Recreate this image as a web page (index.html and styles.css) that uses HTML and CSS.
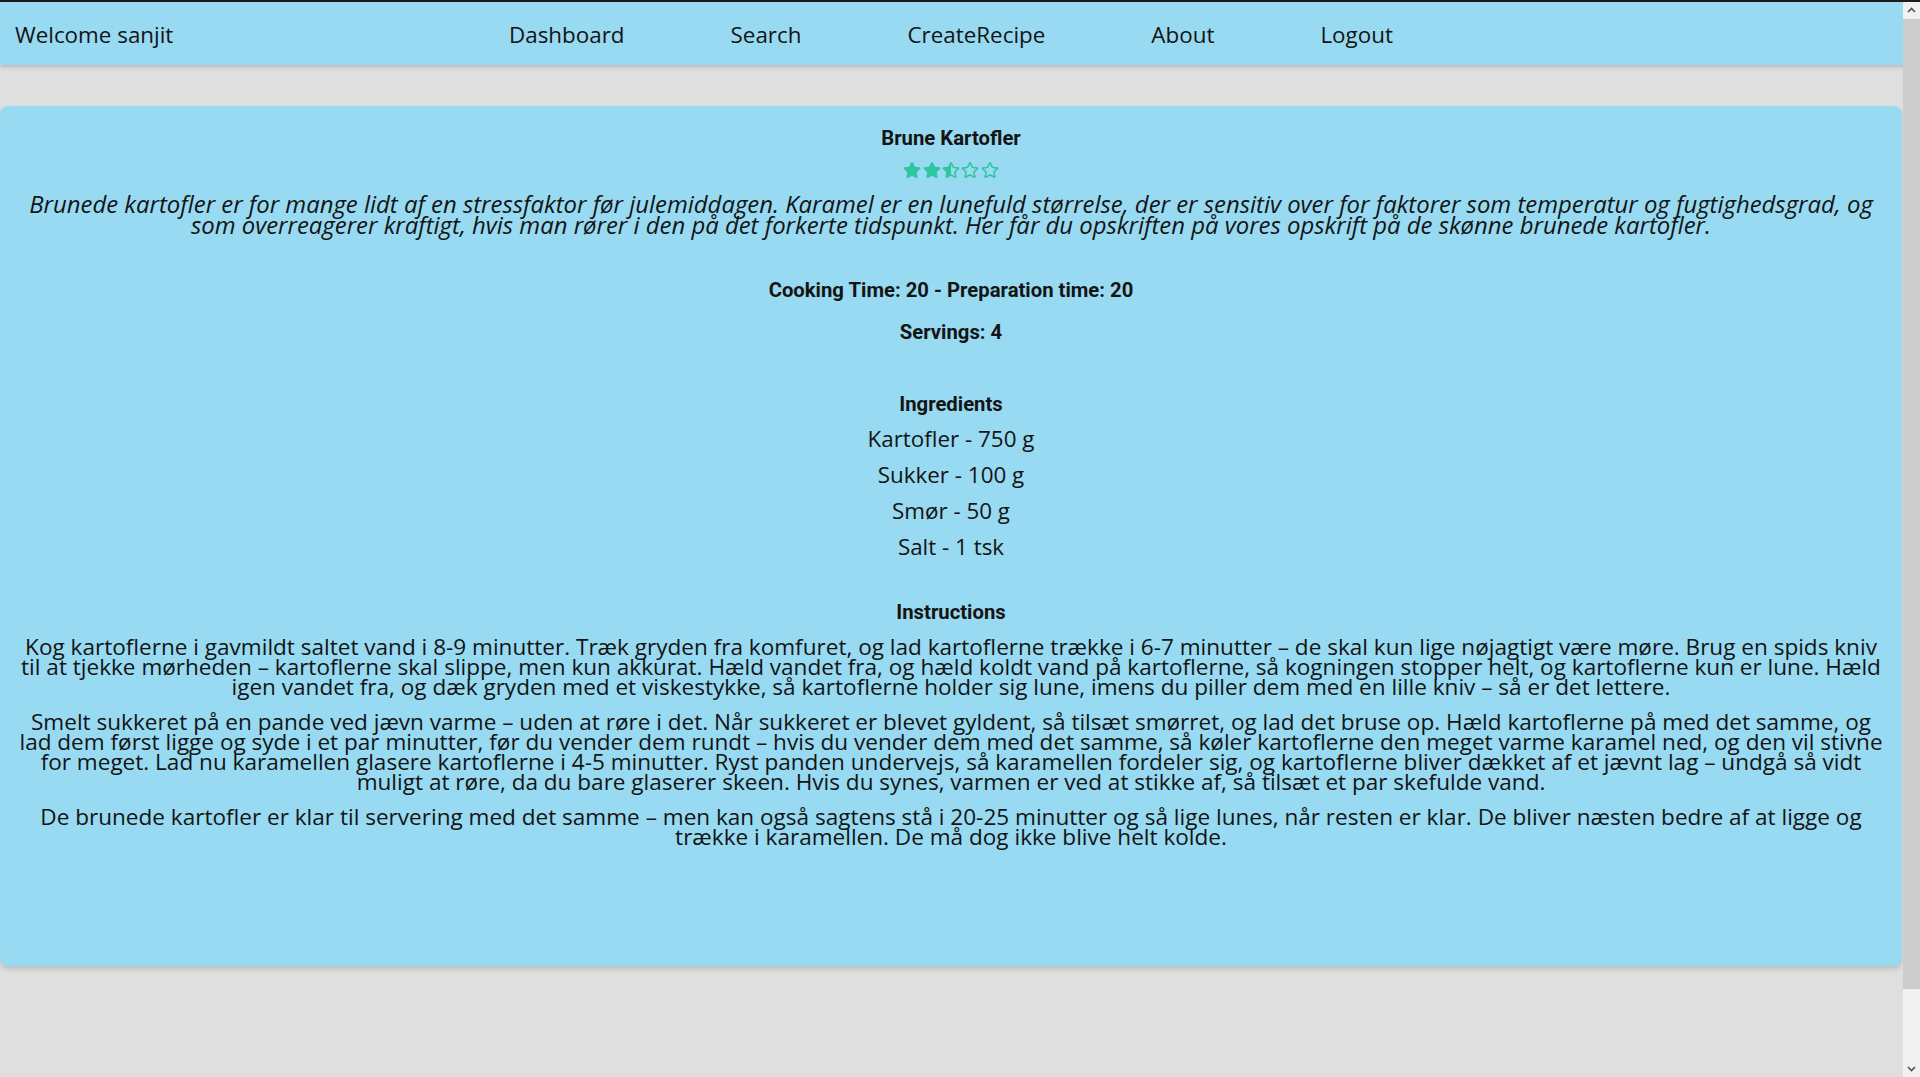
FILE: index.html
```html
<!DOCTYPE html>
<html lang="da">
<head>
<meta charset="utf-8">
<title>Brune Kartofler</title>
<link rel="stylesheet" href="styles.css">
</head>
<body>
<nav class="navbar">
  <div class="brand">Welcome sanjit</div>
  <ul class="links">
    <li>Dashboard</li>
    <li>Search</li>
    <li>CreateRecipe</li>
    <li>About</li>
    <li>Logout</li>
  </ul>
</nav>
<main class="page">
  <section class="card">
    <h3 class="title">Brune Kartofler</h3>
    <div class="stars">
      <svg class="star" viewBox="0 0 576 512"><path d="M259.3 17.8L194 150.2 47.9 171.5c-26.2 3.8-36.7 36.1-17.7 54.6l105.7 103-25 145.5c-4.5 26.3 23.2 46 46.4 33.7L288 439.6l130.7 68.7c23.2 12.2 50.9-7.4 46.4-33.7l-25-145.5 105.7-103c19-18.5 8.5-50.8-17.7-54.6L382 150.2 316.7 17.8c-11.7-23.6-45.6-23.9-57.4 0z"/></svg>
      <svg class="star" viewBox="0 0 576 512"><path d="M259.3 17.8L194 150.2 47.9 171.5c-26.2 3.8-36.7 36.1-17.7 54.6l105.7 103-25 145.5c-4.5 26.3 23.2 46 46.4 33.7L288 439.6l130.7 68.7c23.2 12.2 50.9-7.4 46.4-33.7l-25-145.5 105.7-103c19-18.5 8.5-50.8-17.7-54.6L382 150.2 316.7 17.8c-11.7-23.6-45.6-23.9-57.4 0z"/></svg>
      <svg class="star" viewBox="-20 0 576 512"><path d="M508.55 171.51L362.18 150.2 296.77 17.81C290.89 5.98 279.42 0 267.95 0c-11.4 0-22.79 5.9-28.69 17.81l-65.43 132.38-146.38 21.29c-26.25 3.8-36.77 36.09-17.74 54.59l105.89 103-25.06 145.48C86.98 495.33 103.57 512 122.15 512c4.93 0 10-1.17 14.87-3.75l130.95-68.68 130.94 68.7c4.86 2.55 9.92 3.71 14.83 3.71 18.6 0 35.22-16.61 31.66-37.4l-25.03-145.49 105.91-102.98c19.04-18.5 8.52-50.8-17.73-54.6zm-121.74 123.2l-18.12 17.62 4.28 24.88 19.52 113.45-102.13-53.59-22.38-11.74.03-317.19 51.03 103.29 11.18 22.63 25.01 3.64 114.23 16.63-82.65 80.38z"/></svg>
      <svg class="star" viewBox="0 0 576 512"><path d="M528.1 171.5L382 150.2 316.7 17.8c-11.7-23.6-45.6-23.9-57.4 0L194 150.2 47.9 171.5c-26.2 3.8-36.7 36.1-17.7 54.6l105.7 103-25 145.5c-4.5 26.3 23.2 46 46.4 33.7L288 439.6l130.7 68.7c23.2 12.2 50.9-7.4 46.4-33.7l-25-145.5 105.7-103c19-18.5 8.5-50.8-17.7-54.6zM388.6 312.3l23.7 138.4L288 385.4l-124.3 65.3 23.7-138.4-100.6-98 139-20.2 62.2-126 62.2 126 139 20.2-100.6 98z"/></svg>
      <svg class="star" viewBox="0 0 576 512"><path d="M528.1 171.5L382 150.2 316.7 17.8c-11.7-23.6-45.6-23.9-57.4 0L194 150.2 47.9 171.5c-26.2 3.8-36.7 36.1-17.7 54.6l105.7 103-25 145.5c-4.5 26.3 23.2 46 46.4 33.7L288 439.6l130.7 68.7c23.2 12.2 50.9-7.4 46.4-33.7l-25-145.5 105.7-103c19-18.5 8.5-50.8-17.7-54.6zM388.6 312.3l23.7 138.4L288 385.4l-124.3 65.3 23.7-138.4-100.6-98 139-20.2 62.2-126 62.2 126 139 20.2-100.6 98z"/></svg>
    </div>
    <p class="desc">Brunede kartofler er for mange lidt af en stressfaktor før julemiddagen. Karamel er en lunefuld størrelse, der er sensitiv over for faktorer som temperatur og fugtighedsgrad, og som overreagerer kraftigt, hvis man rører i den på det forkerte tidspunkt. Her får du opskriften på vores opskrift på de skønne brunede kartofler.</p>
    <p class="meta">Cooking Time: 20 - Preparation time: 20</p>
    <p class="meta servings">Servings: 4</p>
    <h4 class="section-title ingr-title">Ingredients</h4>
    <ul class="ingredients">
      <li>Kartofler - 750 g</li>
      <li>Sukker - 100 g</li>
      <li>Smør - 50 g</li>
      <li>Salt - 1 tsk</li>
    </ul>
    <h4 class="section-title instr-title">Instructions</h4>
    <p class="step">Kog kartoflerne i gavmildt saltet vand i 8-9 minutter. Træk gryden fra komfuret, og lad kartoflerne trække i 6-7 minutter – de skal kun lige nøjagtigt være møre. Brug en spids kniv til at tjekke mørheden – kartoflerne skal slippe, men kun akkurat. Hæld vandet fra, og hæld koldt vand på kartoflerne, så kogningen stopper helt, og kartoflerne kun er lune. Hæld igen vandet fra, og dæk gryden med et viskestykke, så kartoflerne holder sig lune, imens du piller dem med en lille kniv – så er det lettere.</p>
    <p class="step">Smelt sukkeret på en pande ved jævn varme – uden at røre i det. Når sukkeret er blevet gyldent, så tilsæt smørret, og lad det bruse op. Hæld kartoflerne på med det samme, og lad dem først ligge og syde i et par minutter, før du vender dem rundt – hvis du vender dem med det samme, så køler kartoflerne den meget varme karamel ned, og den vil stivne for meget. Lad nu karamellen glasere kartoflerne i 4-5 minutter. Ryst panden undervejs, så karamellen fordeler sig, og kartoflerne bliver dækket af et jævnt lag – undgå så vidt muligt at røre, da du bare glaserer skeen. Hvis du synes, varmen er ved at stikke af, så tilsæt et par skefulde vand.</p>
    <p class="step">De brunede kartofler er klar til servering med det samme – men kan også sagtens stå i 20-25 minutter og så lige lunes, når resten er klar. De bliver næsten bedre af at ligge og trække i karamellen. De må dog ikke blive helt kolde.</p>
  </section>
</main>
<div class="scrollbar" aria-hidden="true">
  <div class="sb-btn"><svg viewBox="0 0 17 17"><polyline points="5,10 8.5,6.5 12,10"/></svg></div>
  <div class="sb-thumb"></div>
  <div class="sb-track"></div>
  <div class="sb-btn"><svg viewBox="0 0 17 17"><polyline points="5,7 8.5,10.5 12,7"/></svg></div>
</div>
</body>
</html>
```

FILE: styles.css
```css
html, body {
  margin: 0;
  padding: 0;
}

body {
  background: #dfdfdf;
  border-top: 2px solid #1b1b1b;
  color: #141414;
  font-family: "Open Sans", "Liberation Sans", sans-serif;
}

.navbar {
  display: flex;
  align-items: center;
  height: 63px;
  box-sizing: border-box;
  padding-top: 2px;
  background: #97daf1;
  box-shadow: 0 2px 4px rgba(0, 0, 0, 0.18);
  font-size: 22.4px;
  position: relative;
  z-index: 1;
}

.brand {
  flex: 0 0 509px;
  box-sizing: border-box;
  padding-left: 15px;
}

.links {
  display: flex;
  gap: 106px;
  list-style: none;
  margin: 0;
  padding: 0;
}

.page {
  padding-top: 41px;
  padding-bottom: 190px;
}

.card {
  width: 1902px;
  box-sizing: border-box;
  min-height: 860px;
  background: #97daf1;
  border-radius: 8px;
  box-shadow: 0 3px 5px rgba(0, 0, 0, 0.15);
  padding: 20px 16px 0;
  text-align: center;
}

.title,
.meta,
.section-title {
  font-family: Roboto, "Liberation Sans", sans-serif;
  font-weight: 700;
  font-size: 20.3px;
  line-height: 24px;
  margin: 0;
}

.stars {
  display: flex;
  justify-content: center;
  gap: 1.3px;
  height: 17px;
  margin-top: 12px;
}

.star {
  width: 18px;
  height: 16px;
  fill: #2fc59e;
}

.desc {
  font-style: italic;
  font-size: 23.9px;
  line-height: 21px;
  margin: 14px 0 0;
}

.meta {
  margin-top: 43px;
}

.servings {
  margin-top: 18px;
}

.ingr-title {
  margin-top: 48px;
}

.ingredients {
  list-style: none;
  margin: 5px 0 0;
  padding: 0;
  font-size: 22.4px;
  line-height: 36px;
}

.instr-title {
  margin-top: 35px;
}

.step {
  font-size: 22.55px;
  line-height: 20px;
  margin: 15px 0 0;
}

.instr-title + .step {
  margin-top: 13px;
}

.scrollbar {
  position: fixed;
  top: 2px;
  right: 0;
  bottom: 0;
  width: 17px;
  display: flex;
  flex-direction: column;
  background: #f1f1f1;
  z-index: 10;
}

.sb-btn {
  height: 17px;
  flex: 0 0 17px;
  background: #f1f1f1;
}

.sb-btn svg {
  display: block;
  width: 17px;
  height: 17px;
  fill: none;
  stroke: #505050;
  stroke-width: 1.6;
}

.sb-thumb {
  flex: 0 0 970px;
  background: #cdcdcd;
}

.sb-track {
  flex: 1 1 auto;
}
```
